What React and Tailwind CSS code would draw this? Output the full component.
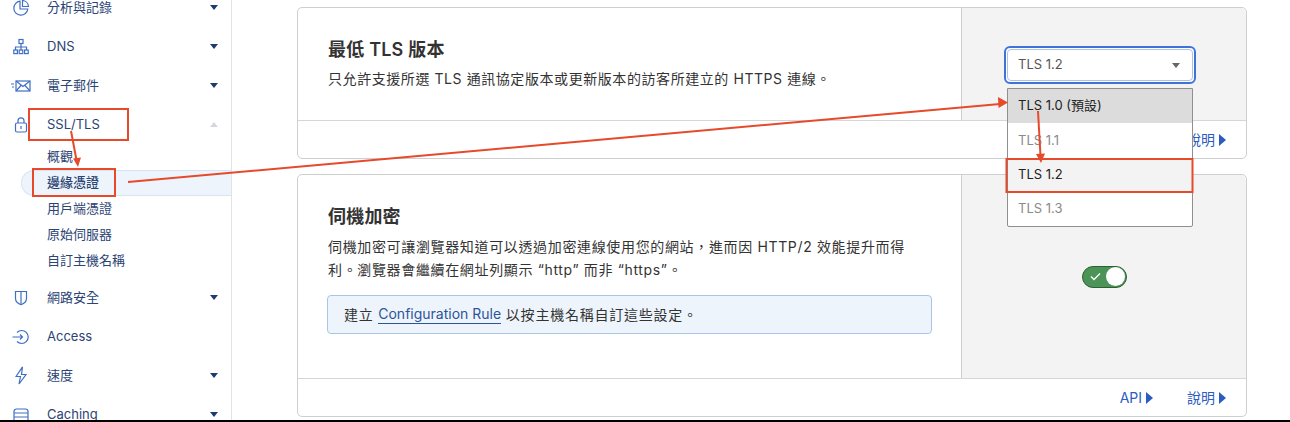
import { useState } from 'react';

const FONT = 'font-["Inter","Noto_Sans_CJK_TC",sans-serif]';

const Analytics = () => (
  <svg width="18" height="18" viewBox="0 0 18 18" fill="none" stroke="#3f6fc4" strokeWidth="1.2">
    <path d="M8 2.2a7 7 0 1 0 7.8 7.8H8V2.2Z" />
    <path d="M10.500 1.500a6.500 6.500 0 0 1 6 6h-6v-6Z" />
  </svg>
);

const Dns = () => (
  <svg width="18" height="18" viewBox="0 0 18 18" fill="none" stroke="#3f6fc4" strokeWidth="1.2">
    <rect x="7" y="1.500" width="4" height="4" />
    <path d="M9 5.500V9M3.500 12V9h11v3M9 9v3" />
    <rect x="1.800" y="12" width="3.600" height="3.600" />
    <rect x="7.200" y="12" width="3.600" height="3.600" />
    <rect x="12.600" y="12" width="3.600" height="3.600" />
  </svg>
);

const Mail = () => (
  <svg width="20" height="14" viewBox="0 0 20 14" fill="none" stroke="#3f6fc4" strokeWidth="1.2">
    <rect x="5" y="2" width="14" height="10" />
    <path d="m5 2 7 5.500L19 2M5 12l5-5.500M19 12l-5-5.500M0 5h3M1 8h2" />
  </svg>
);

const Lock = () => (
  <svg width="14" height="16" viewBox="0 0 14 16" fill="none" stroke="#3f6fc4" strokeWidth="1.2">
    <rect x="1.500" y="6" width="11" height="9" rx="1.500" />
    <path d="M4 6V3.800a3 3 0 0 1 6 0V6M7 9v3" />
  </svg>
);

const Shield = () => (
  <svg width="14" height="16" viewBox="0 0 14 16" fill="none" stroke="#3f6fc4" strokeWidth="1.2">
    <path d="M1.500 1.500h11v7c0 3-2.500 5-5.500 6.200C4 13.500 1.500 11.500 1.500 8.500v-7Z" />
    <path d="M7 1.500v13" />
  </svg>
);

const Access = () => (
  <svg width="18" height="16" viewBox="0 0 18 16" fill="none" stroke="#3f6fc4" strokeWidth="1.2">
    <path d="M5 3.500a6.500 6.500 0 1 1 0 9" />
    <path d="M0.500 8h10M8 5.500 10.500 8 8 10.500" />
  </svg>
);

const Bolt = () => (
  <svg width="12" height="19" viewBox="0 0 12 19" fill="none" stroke="#3f6fc4" strokeWidth="1.2">
    <path d="M7.500 0.800 1 10.500h4.500L4 18l7-9.500H6.500l1-7.700Z" />
  </svg>
);

const Caching = () => (
  <svg width="16" height="14" viewBox="0 0 16 14" fill="none" stroke="#3f6fc4" strokeWidth="1.2">
    <path d="M1 5V3.500A2.500 2.500 0 0 1 3.500 1h9A2.500 2.500 0 0 1 15 3.500V5M1 5h14v4H1V5ZM1 9h14v4H1V9Z" />
  </svg>
);

function Caret({ up }) {
  return up ? (
    <span className="w-0 h-0 border-x-[4px] border-x-transparent border-b-[5px] border-b-[#d3d8e0]" />
  ) : (
    <span className="w-0 h-0 border-x-[4px] border-x-transparent border-t-[5px] border-t-[#1f3a70]" />
  );
}

function NavRow({ icon, label, caret, up }) {
  return (
    <div className="h-[39px] flex items-center">
      <span className="w-[47px] shrink-0 flex justify-center pr-[5px]">{icon}</span>
      <span className="flex-1 text-[13px] text-[#2b4474]">{label}</span>
      {caret && (
        <span className="w-[21px] flex">
          <Caret up={up} />
        </span>
      )}
    </div>
  );
}

function SubRow({ label, active }) {
  return (
    <div
      className={`h-[26px] flex items-center pl-[25px] ml-[21px] text-[13px] text-[#2b4474] rounded-l-full border-y border-l ${
        active ? 'bg-[#eef4fc] border-[#d8e4f4] font-medium' : 'border-transparent'
      }`}
    >
      {label}
    </div>
  );
}

function Sidebar() {
  return (
    <aside className="w-[232px] shrink-0 border-r border-[#e1e3e6] h-[420px] overflow-hidden">
      <div className="-mt-[12px]">
        <NavRow icon={<Analytics />} label="分析與記錄" caret />
        <NavRow icon={<Dns />} label="DNS" caret />
        <NavRow icon={<Mail />} label="電子郵件" caret />
        <NavRow icon={<Lock />} label="SSL/TLS" caret up />
        <div className="pb-[4px]">
          <SubRow label="概觀" />
          <SubRow label="邊緣憑證" active />
          <SubRow label="用戶端憑證" />
          <SubRow label="原始伺服器" />
          <SubRow label="自訂主機名稱" />
        </div>
        <NavRow icon={<Shield />} label="網路安全" caret />
        <NavRow icon={<Access />} label="Access" />
        <NavRow icon={<Bolt />} label="速度" caret />
        <NavRow icon={<Caching />} label="Caching" caret />
      </div>
    </aside>
  );
}

function FooterLink({ label }) {
  return (
    <span className="flex items-center gap-[4px] text-[14px] text-[#2c5cc0]">
      {label}
      <span className="w-0 h-0 border-y-[6px] border-y-transparent border-l-[7px] border-l-[#2c5cc0]" />
    </span>
  );
}

function VersionSelect() {
  const options = [
    { label: 'TLS 1.0 (預設)', cls: 'bg-[#dcdcdc] text-[#222]' },
    { label: 'TLS 1.1', cls: 'text-[#8a8a8a]' },
    { label: 'TLS 1.2', cls: 'bg-[#f3f3f3] text-[#222]' },
    { label: 'TLS 1.3', cls: 'text-[#8a8a8a]' },
  ];
  return (
    <div className="relative w-[192px] h-[38px] -ml-[8px] mt-[2px]">
      <div className="h-full rounded-[6px] border-2 border-[#3f74d6] p-[1px] bg-white">
        <div className="h-full rounded-[4px] border border-[#a9c3ee] flex items-center justify-between pl-[10px] pr-[12px] text-[13px] text-[#555]">
          TLS 1.2
          <span className="w-0 h-0 border-x-[4.500px] border-x-transparent border-t-[5px] border-t-[#666]" />
        </div>
      </div>
      {/* open list */}
      <div className="absolute left-[3px] top-[42px] w-[186px] bg-white border border-[#8f8f8f] rounded-b-[2px] z-10">
        {options.map((o) => (
          <div key={o.label} className={`h-[34.250px] flex items-center pl-[10px] text-[13px] ${o.cls}`}>
            {o.label}
          </div>
        ))}
      </div>
    </div>
  );
}

function Toggle() {
  const [on, setOn] = useState(true);
  return (
    <button
      onClick={() => setOn(!on)}
      className="w-[45px] h-[22px] rounded-full border border-[#2c5f32] bg-[#4c9357] flex items-center justify-between pl-[7px] pr-[1px]"
    >
      <svg width="11" height="9" viewBox="0 0 11 9" fill="none" stroke="#fff" strokeWidth="1.3">
        <path d="m1 4.500 3 3 6-6" />
      </svg>
      <span className="w-[19px] h-[19px] rounded-full bg-white" />
    </button>
  );
}

function Card({ title, children, right, footer, mainHeight }) {
  return (
    <section className="border border-[#cfcfcf] rounded-[5px] bg-white">
      <div className="flex border-b border-[#d6d6d6]" style={{ height: mainHeight }}>
        <div className="w-[663px] shrink-0 pl-[30px] pr-[29px] pt-[30px]">
          <h2 className="text-[18px] leading-[24px] font-semibold text-[#333] tracking-[0.2px]">{title}</h2>
          {children}
        </div>
        <div className="flex-1 bg-[#f3f3f3] border-l border-[#cfcfcf] rounded-tr-[5px] flex items-center justify-center">
          {right}
        </div>
      </div>
      <div className="h-[37px] flex items-center justify-end gap-[34px] pr-[20px]">{footer}</div>
    </section>
  );
}

function Annotations() {
  const red = '#e64a2b';
  return (
    <svg className="absolute inset-0 z-20 pointer-events-none" width="1290" height="422" fill="none">
      <rect x="29" y="109" width="99" height="31" stroke={red} strokeWidth="2" />
      <rect x="33" y="169" width="82" height="27" stroke={red} strokeWidth="2" />
      <rect x="1006.500" y="159" width="186" height="33" stroke={red} strokeWidth="2" />
      <path d="M71 131 76.500 160" stroke={red} strokeWidth="2" />
      <path d="M73 158.500 81 157.500 78 167Z" fill={red} />
      <path d="M128 182 1000 104" stroke={red} strokeWidth="2" />
      <path d="m998 97 10 5.500-9.500 5.500Z" fill={red} />
      <path d="M1038 111 1040.500 156" stroke={red} strokeWidth="2" />
      <path d="m1036 154 9-.5-4 9.500Z" fill={red} />
    </svg>
  );
}

export default function App() {
  return (
    <div className={`relative w-[1290px] h-[422px] overflow-hidden bg-white ${FONT}`}>
      <div className="flex h-[420px]">
        <Sidebar />
        <main className="ml-[65px] w-[950px] pt-[7px] flex flex-col gap-[15px]">
          <Card
            title="最低 TLS 版本"
            mainHeight={113}
            right={<VersionSelect />}
            footer={<FooterLink label="說明" />}
          >
            <p className="mt-[5px] text-[14px] leading-[24px] text-[#333] tracking-[0.57px] whitespace-nowrap">
              只允許支援所選 TLS 通訊協定版本或更新版本的訪客所建立的 HTTPS 連線。
            </p>
          </Card>
          <Card
            title="伺機加密"
            mainHeight={204}
            right={<Toggle />}
            footer={
              <>
                <FooterLink label="API" />
                <FooterLink label="說明" />
              </>
            }
          >
            <p className="mt-[6px] max-w-[585px] text-[14px] leading-[23px] text-[#333] tracking-[0.65px]">
              伺機加密可讓瀏覽器知道可以透過加密連線使用您的網站，進而因 HTTP/2 效能提升而得利。瀏覽器會繼續在網址列顯示 “http” 而非 “https”。
            </p>
            <div className="mt-[14px] -ml-[1px] h-[39px] rounded-[4px] border border-[#a9c5e6] bg-[#eef4fc] flex items-center pl-[16px] text-[14px] text-[#333] tracking-[0.77px]">
              建立&nbsp;
              <span className="text-[#2c5598] border-b border-[#2c5598] leading-[18px] tracking-normal">Configuration Rule</span>
              &nbsp;以按主機名稱自訂這些設定。
            </div>
          </Card>
        </main>
      </div>
      <div className="h-[2px] bg-black" />
      <Annotations />
    </div>
  );
}
